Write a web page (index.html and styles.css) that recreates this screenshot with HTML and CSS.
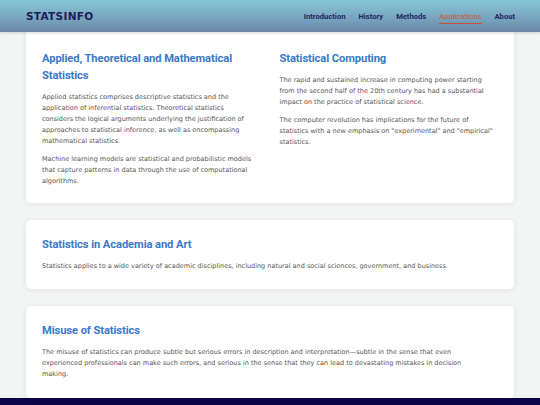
FILE: index.html
```html
<!DOCTYPE html>
<html lang="en">
<head>
<meta charset="utf-8">
<title>StatsInfo</title>
<link rel="stylesheet" href="styles.css">
</head>
<body>
<header class="site-header">
  <div class="logo">STATSINFO</div>
  <nav class="nav">
    <a class="nav-link" href="#">Introduction</a>
    <a class="nav-link" href="#">History</a>
    <a class="nav-link" href="#">Methods</a>
    <a class="nav-link active" href="#">Applications</a>
    <a class="nav-link" href="#">About</a>
  </nav>
</header>
<main class="content">
  <section class="card card-split">
    <div class="col col-left">
      <h2 class="card-title">Applied, Theoretical and Mathematical Statistics</h2>
      <p class="card-text">Applied statistics comprises descriptive statistics and the application of inferential statistics. Theoretical statistics considers the logical arguments underlying the justification of approaches to statistical inference, as well as encompassing mathematical statistics.</p>
      <p class="card-text">Machine learning models are statistical and probabilistic models that capture patterns in data through the use of computational algorithms.</p>
    </div>
    <div class="col">
      <h2 class="card-title">Statistical Computing</h2>
      <p class="card-text">The rapid and sustained increase in computing power starting from the second half of the 20th century has had a substantial impact on the practice of statistical science.</p>
      <p class="card-text">The computer revolution has implications for the future of statistics with a new emphasis on "experimental" and "empirical" statistics.</p>
    </div>
  </section>
  <section class="card">
    <h2 class="card-title">Statistics in Academia and Art</h2>
    <p class="card-text">Statistics applies to a wide variety of academic disciplines, including natural and social sciences, government, and business.</p>
  </section>
  <section class="card card-last">
    <h2 class="card-title">Misuse of Statistics</h2>
    <p class="card-text wide">The misuse of statistics can produce subtle but serious errors in description and interpretation—subtle in the sense that even experienced professionals can make such errors, and serious in the sense that they can lead to devastating mistakes in decision making.</p>
  </section>
</main>
<footer class="site-footer"></footer>
</body>
</html>
```

FILE: styles.css
```css
* { box-sizing: border-box; }
html, body { margin: 0; padding: 0; }
body {
  background: #f3f5f5;
  font-family: "DejaVu Sans", "Open Sans", sans-serif;
  height: 405px;
  overflow: hidden;
}
.site-header {
  position: relative;
  z-index: 2;
  height: 32px;
  display: flex;
  align-items: center;
  justify-content: space-between;
  padding: 0 25px 0 26px;
  background: linear-gradient(180deg, #86c7d4 0%, #7aa9c1 50%, #6a87a8 100%);
  box-shadow: 0 1px 3px rgba(0,0,0,0.15);
}
.logo {
  font-weight: 700;
  font-size: 10.5px;
  letter-spacing: 0.3px;
  color: #1a1d5c;
}
.nav {
  display: flex;
  gap: 13px;
}
.nav-link {
  font-family: Roboto, "Liberation Sans", sans-serif;
  font-size: 7.6px;
  font-weight: 700;
  color: #1d2563;
  text-decoration: none;
  padding: 3px 0 2px;
  border-bottom: 1px solid transparent;
}
.nav-link.active {
  color: #c0664f;
  font-weight: 500;
  border-bottom-color: #c8503c;
}
.content {
  display: flex;
  flex-direction: column;
  gap: 17px;
  padding: 0 26px;
  margin-top: -6px;
}
.card {
  background: #fff;
  border-radius: 5px;
  box-shadow: 0 1px 6px rgba(0,0,0,0.08);
  padding: 16px 17px 17px 16px;
}
.card-split {
  display: grid;
  grid-template-columns: 1fr 1fr;
  column-gap: 20px;
  padding-top: 24px;
  padding-bottom: 16px;
}
.col-left { padding-right: 5px; }
.card-last { padding-bottom: 18px; }
.card-title {
  margin: 0 0 8px;
  font-family: Roboto, "Liberation Sans", sans-serif;
  font-size: 11.2px;
  line-height: 17px;
  font-weight: 700;
  letter-spacing: -0.1px;
  color: #3a78c8;
}
.card-text {
  margin: 0 0 7px;
  font-size: 6.5px;
  line-height: 11px;
  color: #555;
}
.card-text.wide { max-width: 426px; }
.card-text:last-child { margin-bottom: 0; }
.site-footer {
  height: 20px;
  background: #0b0448;
}
```
